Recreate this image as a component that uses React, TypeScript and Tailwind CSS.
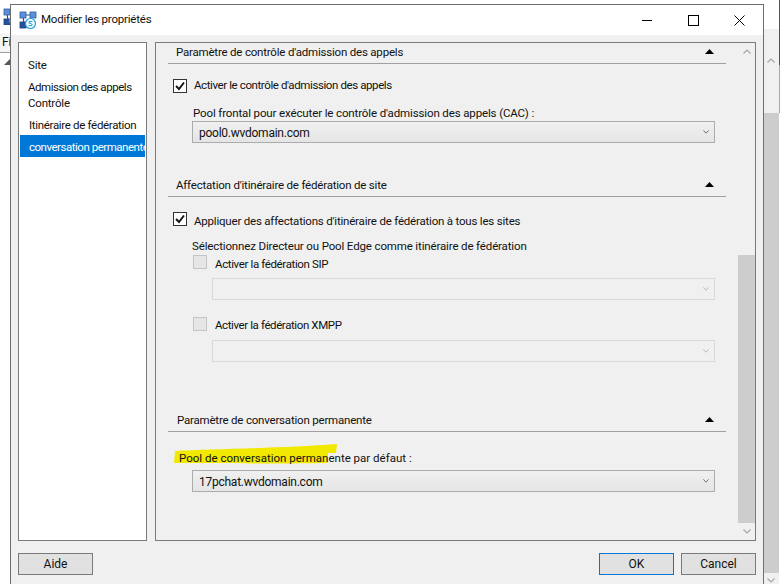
const font = { fontFamily: 'Roboto, "Noto Sans", sans-serif' };

function SkypeIcon({ className }: { className?: string }) {
  return (
    <svg viewBox="0 0 18 18" className={className} width="18" height="18">
      <path d="M4 5 L5 13 M14 5 L8 12 M5 4 H13" stroke="#2a4f8f" strokeWidth="1.2" fill="none" />
      <rect x="1" y="1" width="6" height="6" fill="#5b8fd6" stroke="#2f5ea8" strokeWidth="0.8" />
      <rect x="11" y="1" width="6" height="6" fill="#5b8fd6" stroke="#2f5ea8" strokeWidth="0.8" />
      <rect x="1" y="11" width="6" height="6" fill="#24539e" stroke="#1d4080" strokeWidth="0.8" />
      <circle cx="11.5" cy="12.5" r="5" fill="#fff" stroke="#1fa3e0" strokeWidth="1.2" />
      <path d="M13.4 10.8c-.6-.6-2.9-.9-3.4.3-.5 1.5 3.5 1.2 3.1 2.8-.4 1.2-2.700 1-3.500.2" stroke="#1fa3e0" strokeWidth="1.1" fill="none" />
    </svg>
  );
}

function Tri() {
  return (
    <svg width="9" height="5" viewBox="0 0 9 5" className="block">
      <path d="M4.500 0 L9 5 H0 Z" fill="#000" />
    </svg>
  );
}

function Chevron({ dir, color = "#a6a6a6", small }: { dir: "up" | "down"; color?: string; small?: boolean }) {
  return (
    <svg width={small ? 6 : 8} height={small ? 4 : 5} viewBox="0 0 8 5" className="block" preserveAspectRatio="none">
      <path d={dir === "up" ? "M0.500 4.500 L4 1 L7.500 4.500" : "M0.500 0.500 L4 4 L7.500 0.500"} stroke={color} strokeWidth="1.200" fill="none" />
    </svg>
  );
}

function Section({ title, x = "pl-[8px]" }: { title: string; x?: string }) {
  return (
    <div className={`mr-[12px] flex h-[21px] items-center justify-between border-b border-[#a0a0a0] ${x} pr-[12px]`}>
      <span>{title}</span>
      <span className="relative top-[-2px]"><Tri /></span>
    </div>
  );
}

function Check() {
  return (
    <span className="flex h-[14px] w-[14px] shrink-0 items-center justify-center border border-[#333333] bg-white">
      <svg width="10" height="10" viewBox="0 0 10 10">
        <path d="M1 5 L4 8 L9 1.500" stroke="#111" strokeWidth="1.900" fill="none" />
      </svg>
    </span>
  );
}

function Disabled() {
  return <span className="h-[14px] w-[14px] shrink-0 border border-[#c4c4c4] bg-[#e6e6e6]" />;
}

function Select({ value, disabled, ml }: { value?: string; disabled?: boolean; ml: string }) {
  return (
    <div
      className={`flex h-[22px] items-center justify-between pl-[6px] pr-[5px] ${ml} mr-[23px] border ${
        disabled ? "border-[#d9d9d9] bg-[#f0f0f0]" : "border-[#acacac] bg-gradient-to-b from-[#f0f0f0] to-[#e5e5e5]"
      }`}
    >
      <span className="relative top-[1px] text-[12px] leading-none tracking-[-0.25px]">{value}</span>
      <Chevron dir="down" small color={disabled ? "#b5b5b5" : "#666666"} />
    </div>
  );
}

function Btn({ label, active }: { label: string; active?: boolean }) {
  return (
    <div className={`flex h-[22px] w-[75px] items-center justify-center border bg-[#e1e1e1] text-[12px] tracking-normal ${active ? "border-[#0078d7]" : "border-[#7a7a7a]"}`}>
      {label}
    </div>
  );
}

export default function App() {
  return (
    <div className="relative flex h-[584px] w-[780px] justify-between overflow-hidden bg-white text-[11.500px] tracking-[-0.2px] text-[#111]" style={font}>
      <div className="w-[10px] pt-[8px]">
        <div className="h-[17px] w-[10px] overflow-hidden pl-[3px]"><SkypeIcon /></div>
        <div className="mt-[8px] h-[20px] border-b border-[#a0a0a0] bg-[#f5f5f5] pl-[2px] text-[12px]">Fi</div>
        <div className="ml-[4px] mt-[6px] h-0 w-0 border-b-[6px] border-l-[6px] border-b-[#555555] border-l-transparent" />
      </div>

      <div className="flex w-[17px]">
        <div className="flex w-[16px] flex-col">
          <div className="h-[29px] bg-white" />
          <div className="flex h-[84px] justify-center bg-[#f0f0f0] pt-[29px]"><Chevron dir="up" /></div>
          <div className="h-[460px] bg-[#cdcdcd]" />
          <div className="flex flex-1 justify-center bg-[#f0f0f0] pt-[5px]"><Chevron dir="down" /></div>
        </div>
        <div className="flex w-[1px] flex-col">
          <div className="h-[65px] bg-[#2a5a9a]" />
          <div className="h-[48px] bg-[#a8a8a8]" />
        </div>
      </div>

      <div className="absolute left-[10px] top-[4px] h-[600px] w-[754px] border border-[#6e6e6e] bg-[#f0f0f0]">
        <div className="flex h-[30px] items-center bg-white pl-[8px]">
          <SkypeIcon className="shrink-0" />
          <span className="ml-[4px]">Modifier les propriétés</span>
          <div className="ml-auto flex items-center">
            <svg width="12" height="12" viewBox="0 0 12 12" className="mr-[35px]"><path d="M1 6.500 H11" stroke="#000" /></svg>
            <svg width="11" height="11" viewBox="0 0 11 11" className="mr-[35px]"><rect x="0.500" y="0.500" width="10" height="10" fill="none" stroke="#000" /></svg>
            <svg width="11" height="11" viewBox="0 0 11 11" className="mr-[18px]"><path d="M0.500 0.500 L10.500 10.500 M10.500 0.500 L0.500 10.500" stroke="#000" /></svg>
          </div>
        </div>

        <div className="ml-[7px] mr-[7px] mt-[7px] flex h-[499px] gap-[8px]">
          <div className="w-[129px] overflow-hidden whitespace-nowrap border border-[#7a7a7a] bg-white px-[1px] pt-[13px]">
            <div className="flex h-[19px] items-center pl-[8px]">Site</div>
            <div className="mt-[3px] flex h-[17px] items-center pl-[8px] tracking-[-0.45px]"><span className="relative top-[1px]">Admission des appels</span></div>
            <div className="flex h-[15px] items-center pl-[8px]"><span className="relative top-[1px]">Contrôle</span></div>
            <div className="mt-[3px] flex h-[22px] items-center pl-[9px] tracking-[-0.32px]"><span className="relative top-[2px]">Itinéraire de fédération</span></div>
            <div className="flex h-[22px] items-center bg-[#0078d7] pl-[9px] tracking-[-0.48px] text-white"><span className="relative top-[2px]">conversation permanente</span></div>
          </div>

          <div className="flex w-[601px] border border-[#7a7a7a]">
            <div className="w-[582px] pl-[12px]">
              <Section title="Paramètre de contrôle d'admission des appels" />
              <div className="ml-[5px] mt-[15px] flex h-[14px] items-center gap-[7px]"><Check /><span className="tracking-[-0.4px]">Activer le contrôle d'admission des appels</span></div>
              <div className="relative top-[1px] ml-[25px] mt-[11px] leading-[16px] tracking-[-0.13px]">Pool frontal pour exécuter le contrôle d'admission des appels (CAC) :</div>
              <div className="mt-[1px]"><Select ml="ml-[24px]" value="pool0.wvdomain.com" /></div>

              <div className="mt-[33px]"><Section title="Affectation d'itinéraire de fédération de site" /></div>
              <div className="ml-[5px] mt-[15px] flex h-[14px] items-center gap-[7px]"><Check /><span className="relative top-[3px]">Appliquer des affectations d'itinéraire de fédération à tous les sites</span></div>
              <div className="relative top-[1px] ml-[24px] mt-[11px] leading-[16px] tracking-[-0.14px]">Sélectionnez Directeur ou Pool Edge comme itinéraire de fédération</div>
              <div className="ml-[25px] mt-[2px] flex h-[14px] items-center gap-[8px]"><Disabled /><span className="relative top-[3px] tracking-[-0.37px]">Activer la fédération SIP</span></div>
              <div className="mt-[9px]"><Select ml="ml-[44px]" disabled /></div>
              <div className="ml-[25px] mt-[17px] flex h-[14px] items-center gap-[8px]"><Disabled /><span className="relative top-[2px] tracking-[-0.4px]">Activer la fédération XMPP</span></div>
              <div className="mt-[9px]"><Select ml="ml-[44px]" disabled /></div>

              <div className="mt-[49px]"><Section title="Paramètre de conversation permanente" x="pl-[9px]" /></div>
              <div className="relative ml-[11px] mt-[17px] leading-[16px] tracking-[0px]">
                <svg width="170" height="22" viewBox="0 0 170 22" className="absolute left-[-5px] top-[-5px]">
                  <path d="M1 7 C40 5 110 4 163 0 L162 9 L154 9 L154 19 C100 20 40 19 0 19 Z" fill="#f2e900" />
                </svg>
                <span className="relative top-[1px]">Pool de conversation permanente par défaut :</span>
              </div>
              <div className="mt-[5px]"><Select ml="ml-[24px]" value="17pchat.wvdomain.com" /></div>
            </div>
            <div className="flex w-[17px] flex-col">
              <div className="flex h-[212px] justify-center pt-[6px]"><Chevron dir="up" /></div>
              <div className="h-[268px] bg-[#cdcdcd]" />
              <div className="flex flex-1 justify-center pt-[6px]"><Chevron dir="down" /></div>
            </div>
          </div>
        </div>

        <div className="ml-[7px] mr-[7px] mt-[12px] flex items-center">
          <Btn label="Aide" />
          <div className="ml-auto flex gap-[7px]"><Btn label="OK" active /><Btn label="Cancel" /></div>
        </div>
      </div>
    </div>
  );
}
